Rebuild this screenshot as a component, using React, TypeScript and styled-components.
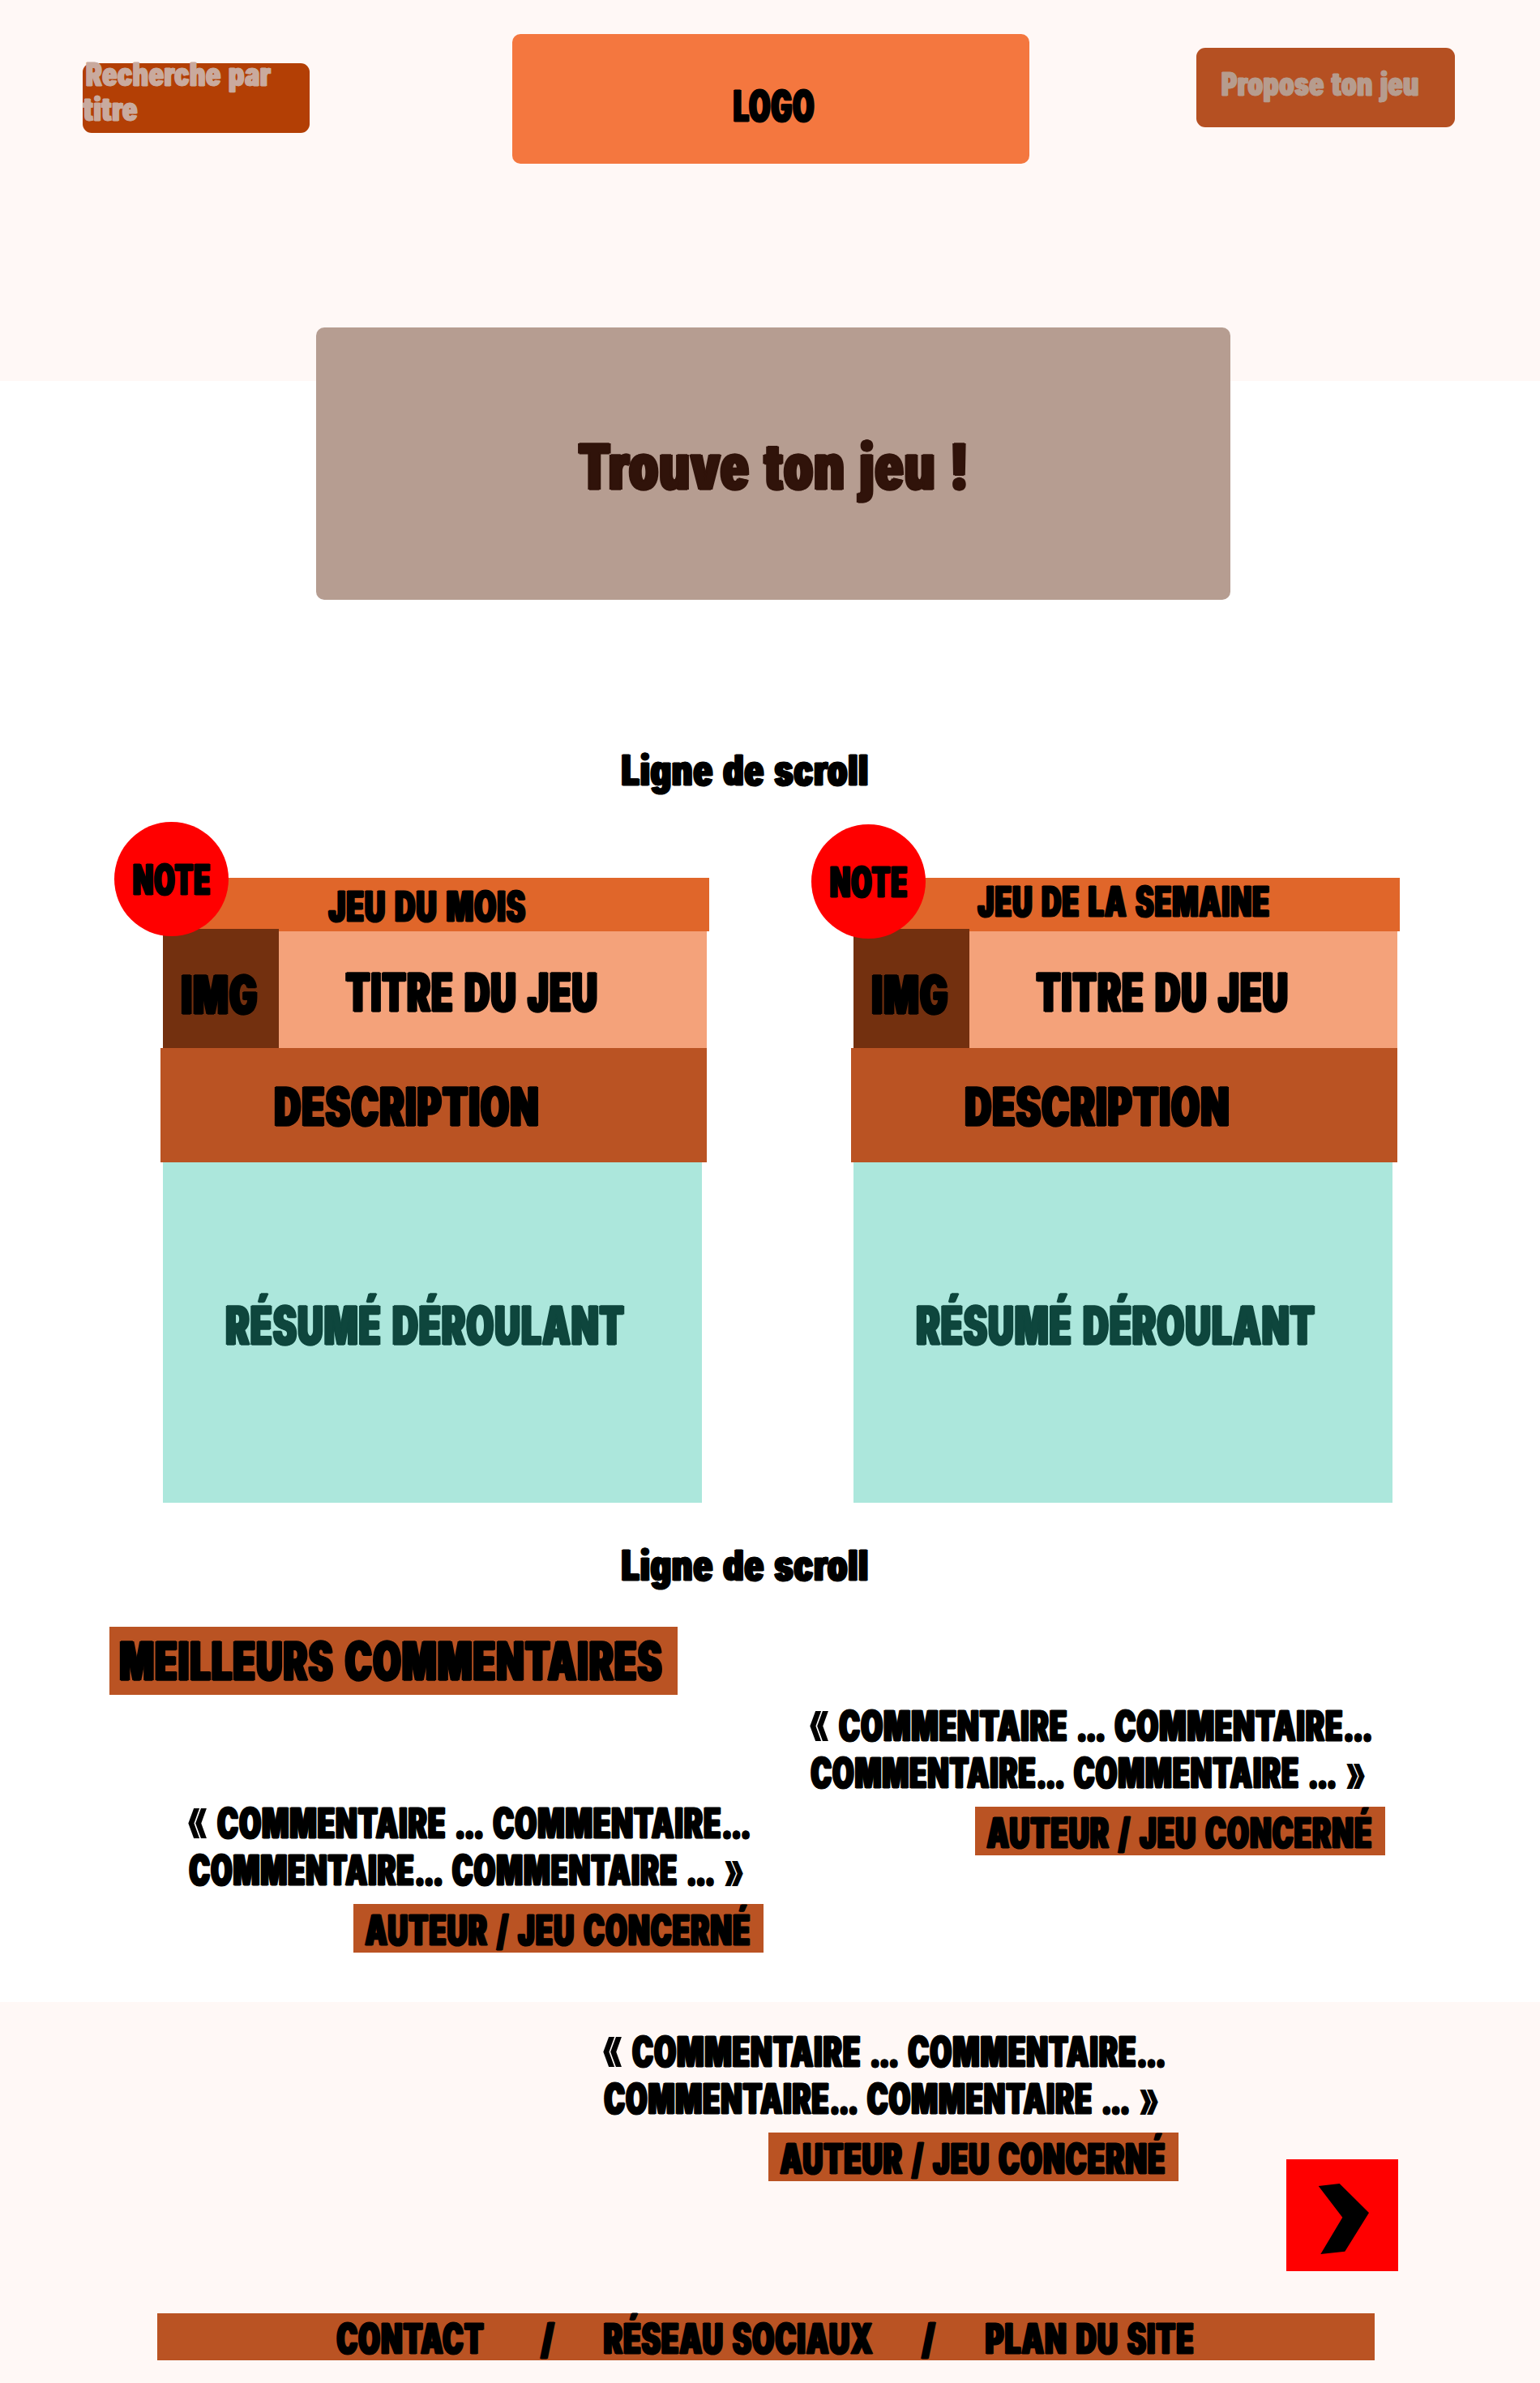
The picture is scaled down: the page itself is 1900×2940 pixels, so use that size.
import React, { useLayoutEffect, useRef, useState } from "react";
import styled, { createGlobalStyle } from "styled-components";

const INK = "#000000";
const RUST = "#ba5323";
const FONT = '"Inter"';
const WEIGHT = 900;
const CAP_RATIO = 0.735;
const SPREAD = 0.042;
const TRACKING = 0.035;

const GlobalStyle = createGlobalStyle`
  body {
    margin: 0;
    background: #ffffff;
  }
  *, *::before, *::after {
    box-sizing: border-box;
  }
`;

/* ---------- Condensed poster lettering ---------- */

const LabelBox = styled.span<{ $width: number; $cap: number }>`
  display: block;
  flex: none;
  width: ${(p) => p.$width}px;
  height: ${(p) => p.$cap}px;
`;

const LabelText = styled.span<{ $cap: number; $color: string; $stroke: number }>`
  display: inline-block;
  font-family: Impact, ${FONT}, sans-serif;
  font-weight: ${WEIGHT};
  font-size: ${(p) => p.$cap / CAP_RATIO}px;
  line-height: ${(p) => p.$cap}px;
  letter-spacing: ${TRACKING}em;
  word-spacing: 0.08em;
  white-space: pre;
  color: ${(p) => p.$color};
  -webkit-text-stroke: ${(p) => p.$stroke}px ${(p) => p.$color};
  text-shadow: ${SPREAD}em 0 ${(p) => p.$color}, -${SPREAD}em 0 ${(p) => p.$color};
  transform-origin: 0 50%;
  vertical-align: top;
`;

const Dots = styled.span`
  letter-spacing: -0.04em;
  padding-right: 0.05em;
`;

const OpenQuote = styled.span`
  display: inline-block;
  text-shadow: none;
  -webkit-text-stroke: 0;
  transform: translateY(-0.09em) scaleY(1.55);
`;

const CloseQuote = styled.span`
  display: inline-block;
  text-shadow: none;
  -webkit-text-stroke: 0;
  transform: scaleY(1.3);
`;

function renderPiece(piece: string, key: number) {
  if (piece === "...") return <Dots key={key}>{piece}</Dots>;
  if (piece === "«") return <OpenQuote key={key}>{piece}</OpenQuote>;
  if (piece === "»") return <CloseQuote key={key}>{piece}</CloseQuote>;
  return piece;
}

type LabelProps = { text: string; width: number; cap?: number; color?: string };

/* Squeezes a line so that its ink fills exactly the given width. */
function Label({ text, width, cap = 38, color = INK }: LabelProps) {
  const ref = useRef<HTMLSpanElement>(null);
  const [transform, setTransform] = useState("none");
  const stroke = cap * 0.03;
  useLayoutEffect(() => {
    const ctx = document.createElement("canvas").getContext("2d");
    if (!ctx || !ref.current) return;
    const style = getComputedStyle(ref.current);
    const size = parseFloat(style.fontSize);
    ctx.font = `${style.fontWeight} ${style.fontSize} ${style.fontFamily}`;
    const first = ctx.measureText(text[0]);
    const last = ctx.measureText(text[text.length - 1]);
    const grow = stroke / 2 + SPREAD * size;
    const left = first.actualBoundingBoxLeft + (text[0] === "«" ? 0 : grow);
    const right =
      last.actualBoundingBoxRight - last.width - TRACKING * size + (text.endsWith("»") ? 0 : grow);
    const scale = (width + 1) / (ref.current.offsetWidth + left + right);
    setTransform(`translateX(${left * scale - 0.7}px) scaleX(${scale})`);
  }, [text, width, stroke]);
  return (
    <LabelBox $width={width} $cap={cap}>
      <LabelText ref={ref} $cap={cap} $color={color} $stroke={stroke} style={{ transform }}>
        {text.split(/(\.\.\.|«|»)/).filter(Boolean).map(renderPiece)}
      </LabelText>
    </LabelBox>
  );
}

/* ---------- Page ---------- */

const Page = styled.div`
  display: flex;
  flex-direction: column;
  width: 1900px;
  height: 2940px;
  overflow: hidden;
  background: linear-gradient(#fff8f6 0 470px, #ffffff 470px 2470px, #fff8f6 2470px);
`;

const Header = styled.header`
  display: flex;
  align-items: flex-start;
  height: 404px;
  padding-left: 102px;
`;

const Search = styled.div`
  display: flex;
  flex-direction: column;
  gap: 14px;
  width: 280px;
  height: 86px;
  margin-top: 78px;
  border-radius: 11px;
  background: #b33f05;
`;

const Indent = styled.div`
  padding-left: 4px;
`;

const Logo = styled.div`
  width: 638px;
  height: 160px;
  margin: 42px 0 0 250px;
  padding: 70px 0 0 272.5px;
  border-radius: 10px;
  background: #f4773f;
`;

const Propose = styled.div`
  width: 319px;
  height: 98px;
  margin: 59px 0 0 206px;
  padding: 31px 0 0 31px;
  border-radius: 11px;
  background: #b55022;
`;

const Hero = styled.section`
  flex: none;
  width: 1128px;
  height: 336px;
  margin-left: 390px;
  padding: 143px 0 0 323px;
  border-radius: 10px;
  background: #b69d91;
`;

const ScrollLine = styled.div<{ $top: number }>`
  flex: none;
  height: 38px;
  margin: ${(p) => p.$top}px 0 0 766.5px;
`;

/* ---------- Game cards ---------- */

const Cards = styled.section`
  display: flex;
  gap: 175px;
  margin-top: 114px;
  padding-left: 198px;
`;

const Card = styled.article`
  position: relative;
  width: 677px;
`;

const Ribbon = styled.div<{ $x: number; $y: number }>`
  height: 66px;
  margin-left: 3px;
  padding: ${(p) => p.$y}px 0 0 ${(p) => p.$x}px;
  background: #e0662a;
`;

const TitleRow = styled.div`
  display: flex;
  height: 144px;
  width: 671px;
  margin-left: 3px;
  background: #f4a27a;
`;

const Thumb = styled.div`
  width: 143px;
  height: 147px;
  margin-top: -3px;
  padding: 58px 0 0 23px;
  background: #73300f;
`;

const GameTitle = styled.div`
  padding: 52px 0 0 82px;
`;

const Description = styled.div`
  width: 674px;
  height: 141px;
  padding: 49px 0 0 140.5px;
  background: ${RUST};
`;

const Summary = styled.div`
  width: 665px;
  height: 420px;
  margin-left: 3px;
  padding: 178px 0 0 77.5px;
  background: #ace7dc;
`;

const Badge = styled.div<{ $left: number; $top: number }>`
  position: absolute;
  left: ${(p) => p.$left}px;
  top: ${(p) => p.$top}px;
  width: 141px;
  height: 141px;
  padding: 52px 0 0 23px;
  border-radius: 50%;
  background: #ff0000;
`;

/* ---------- Comments ---------- */

const Comments = styled.section`
  display: flex;
  align-items: flex-start;
  height: 401px;
  margin-top: 57px;
  padding-left: 135px;
`;

const LeftColumn = styled.div`
  display: flex;
  flex-direction: column;
  gap: 139px;
  width: 865px;
`;

const RightColumn = styled.div`
  padding-top: 103px;
`;

const SectionTitle = styled.div`
  width: 701px;
  height: 84px;
  padding: 19px 0 0 13px;
  background: ${RUST};
`;

const CommentBlock = styled.article<{ $indent?: number }>`
  display: flex;
  flex-direction: column;
  width: 708.5px;
  margin-left: ${(p) => p.$indent ?? 0}px;
`;

const Quote = styled.div`
  display: flex;
  flex-direction: column;
  gap: 20px;
`;

const Author = styled.div`
  align-self: flex-end;
  width: 506px;
  height: 60px;
  margin-top: 23px;
  padding: 13px 0 0 14px;
  background: ${RUST};
`;

const LastRow = styled.section`
  display: flex;
  align-items: flex-start;
  padding: 104px 0 0 745px;
`;

const NextButton = styled.div`
  width: 138px;
  height: 138px;
  margin: 152px 0 0 133.5px;
  background: #ff0000;
`;

const Footer = styled.footer`
  display: flex;
  width: 1502px;
  height: 58px;
  margin: 52px 0 0 194px;
  padding: 12px 0 0 221px;
  background: ${RUST};
`;

const Gap = styled.span<{ $w: number }>`
  flex: none;
  width: ${(p) => p.$w}px;
`;

type GameCardProps = {
  heading: string;
  headingWidth: number;
  x: number;
  y: number;
  badgeLeft: number;
  badgeTop: number;
};

function GameCard({ heading, headingWidth, x, y, badgeLeft, badgeTop }: GameCardProps) {
  return (
    <Card>
      <Ribbon $x={x} $y={y}>
        <Label text={heading} width={headingWidth} />
      </Ribbon>
      <TitleRow>
        <Thumb>
          <Label text="IMG" width={94} cap={48} />
        </Thumb>
        <GameTitle>
          <Label text="TITRE DU JEU" width={311.5} cap={48} />
        </GameTitle>
      </TitleRow>
      <Description>
        <Label text="DESCRIPTION" width={326} cap={48} />
      </Description>
      <Summary>
        <Label text="RÉSUMÉ DÉROULANT" width={492} cap={48} color="#0e463d" />
      </Summary>
      <Badge $left={badgeLeft} $top={badgeTop}>
        <Label text="NOTE" width={96} />
      </Badge>
    </Card>
  );
}

function Comment({ indent }: { indent?: number }) {
  return (
    <CommentBlock $indent={indent}>
      <Quote>
        <Label text="« COMMENTAIRE ... COMMENTAIRE..." width={691} />
        <Label text="COMMENTAIRE... COMMENTAIRE ... »" width={683.5} />
      </Quote>
      <Author>
        <Label text="AUTEUR / JEU CONCERNÉ" width={476} />
      </Author>
    </CommentBlock>
  );
}

export default function App() {
  return (
    <>
      <GlobalStyle />
      <Page>
        <Header>
          <Search>
            <Indent>
              <Label text="Recherche par" width={229} cap={29} color="#c9aa9e" />
            </Indent>
            <Label text="titre" width={68} cap={29} color="#c9aa9e" />
          </Search>
          <Logo>
            <Label text="LOGO" width={100} cap={39} />
          </Logo>
          <Propose>
            <Label text="Propose ton jeu" width={243} cap={29} color="#b69c8e" />
          </Propose>
        </Header>
        <Hero>
          <Label text="Trouve ton jeu !" width={480} cap={58} color="#30130a" />
        </Hero>
        <ScrollLine $top={191}>
          <Label text="Ligne de scroll" width={304} />
        </ScrollLine>
        <Cards>
          <GameCard heading="JEU DU MOIS" headingWidth={243.5} x={203.5} y={16} badgeLeft={-57} badgeTop={-69} />
          <GameCard heading="JEU DE LA SEMAINE" headingWidth={360} x={153} y={10} badgeLeft={-49} badgeTop={-66} />
        </Cards>
        <ScrollLine $top={58}>
          <Label text="Ligne de scroll" width={304} />
        </ScrollLine>
        <Comments>
          <LeftColumn>
            <SectionTitle>
              <Label text="MEILLEURS COMMENTAIRES" width={669} cap={48} />
            </SectionTitle>
            <Comment indent={98} />
          </LeftColumn>
          <RightColumn>
            <Comment />
          </RightColumn>
        </Comments>
        <LastRow>
          <Comment />
          <NextButton>
            <svg width="138" height="138" viewBox="0 0 138 138">
              <path d="M39.7 33 65.7 30 102 66 72.3 113.7 42.3 117 69.3 71.7Z" fill="#000000" />
            </svg>
          </NextButton>
        </LastRow>
        <Footer>
          <Label text="CONTACT" width={183} />
          <Gap $w={68} />
          <Label text="/" width={19} />
          <Gap $w={60} />
          <Label text="RÉSEAU SOCIAUX" width={333} />
          <Gap $w={58} />
          <Label text="/" width={19} />
          <Gap $w={60.5} />
          <Label text="PLAN DU SITE" width={257} />
        </Footer>
      </Page>
    </>
  );
}
